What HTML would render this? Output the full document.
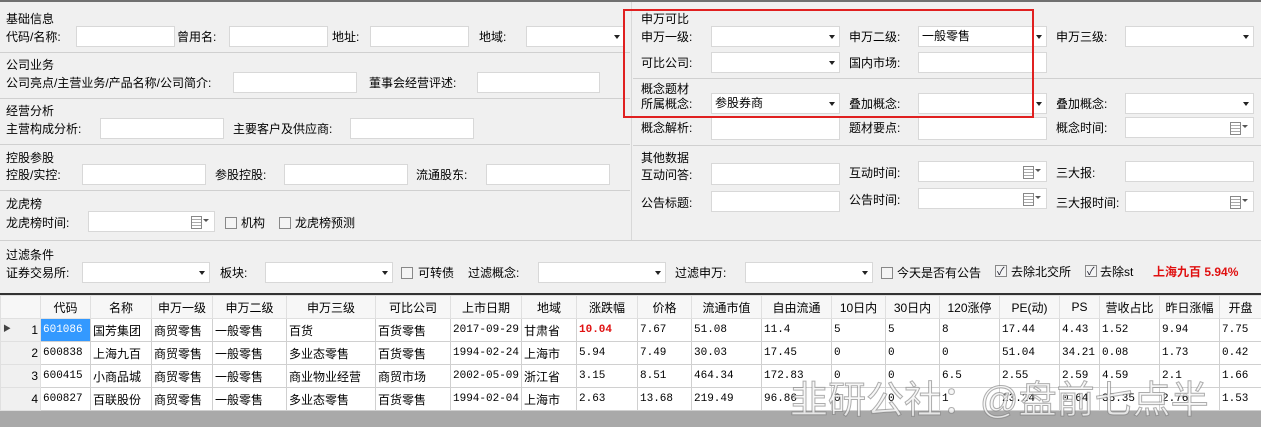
<!DOCTYPE html><html><head><meta charset="utf-8"><style>
*{margin:0;padding:0;box-sizing:border-box}
body{width:1261px;height:427px;overflow:hidden;background:#f0f0f0;font-family:"Liberation Sans","Noto Sans CJK SC",sans-serif;font-size:12px;color:#000;position:relative}
.a{position:absolute;white-space:nowrap;line-height:14px}
.i{position:absolute;background:#fff;border:1px solid #d8d8d8;height:21px;font-size:12px;line-height:19px;padding-left:3px}
.c::after{content:"";position:absolute;right:4px;top:8px;border-left:3.5px solid transparent;border-right:3.5px solid transparent;border-top:4px solid #222}
.d::after{content:"";position:absolute;right:5px;top:7px;border-left:3px solid transparent;border-right:3px solid transparent;border-top:3px solid #555}
.d::before{content:"";position:absolute;right:12px;top:4px;width:9px;height:11px;border:1px solid #888;background:repeating-linear-gradient(#fff 0 2px,#aaa 2px 3px)}
.sep{position:absolute;height:1px;background:#fff;border-top:1px solid #d0d0d0}
.cb{position:absolute;width:12px;height:12px;border:1px solid #888;background:#f4f4f4}
.cb.k::after{content:"✓";position:absolute;left:1px;top:-3px;font-size:11px;color:#223}
table{position:absolute;left:0;top:295px;border-collapse:collapse;font-size:12px;background:#fff;table-layout:fixed;width:1261px}
td{border:1px solid #d0d0d0;height:23px;padding:0 2px;white-space:nowrap;overflow:hidden}
td.n{font-family:"Liberation Mono","Noto Sans CJK SC",monospace;font-size:11px}
tr.h td{background:#f7f7f7;text-align:center;border-color:#e0e0e0}
td.r{background:#f0f0f0;text-align:right;border-color:#e0e0e0}
</style></head><body>
<div style="position:absolute;left:0;top:0;width:1261px;height:2px;background:#707070"></div>
<div class="a" style="left:6px;top:12px">基础信息</div>
<div class="a" style="left:6px;top:30px">代码/名称:</div><div class="i" style="left:76px;top:26px;width:99px"></div>
<div class="a" style="left:177px;top:30px">曾用名:</div><div class="i" style="left:229px;top:26px;width:99px"></div>
<div class="a" style="left:332px;top:30px">地址:</div><div class="i" style="left:370px;top:26px;width:99px"></div>
<div class="a" style="left:479px;top:30px">地域:</div><div class="i c" style="left:526px;top:26px;width:99px"></div>
<div class="sep" style="left:0;top:52px;width:630px"></div>
<div class="a" style="left:6px;top:58px">公司业务</div>
<div class="a" style="left:6px;top:76px">公司亮点/主营业务/产品名称/公司简介:</div><div class="i" style="left:233px;top:72px;width:124px"></div>
<div class="a" style="left:369px;top:76px">董事会经营评述:</div><div class="i" style="left:477px;top:72px;width:123px"></div>
<div class="sep" style="left:0;top:98px;width:630px"></div>
<div class="a" style="left:6px;top:104px">经营分析</div>
<div class="a" style="left:6px;top:122px">主营构成分析:</div><div class="i" style="left:100px;top:118px;width:124px"></div>
<div class="a" style="left:233px;top:122px">主要客户及供应商:</div><div class="i" style="left:350px;top:118px;width:124px"></div>
<div class="sep" style="left:0;top:144px;width:630px"></div>
<div class="a" style="left:6px;top:151px">控股参股</div>
<div class="a" style="left:6px;top:168px">控股/实控:</div><div class="i" style="left:82px;top:164px;width:124px"></div>
<div class="a" style="left:215px;top:168px">参股控股:</div><div class="i" style="left:284px;top:164px;width:124px"></div>
<div class="a" style="left:416px;top:168px">流通股东:</div><div class="i" style="left:486px;top:164px;width:124px"></div>
<div class="sep" style="left:0;top:190px;width:630px"></div>
<div class="a" style="left:6px;top:197px">龙虎榜</div>
<div class="a" style="left:6px;top:216px">龙虎榜时间:</div><div class="i d" style="left:88px;top:211px;width:127px"></div>
<div class="cb" style="left:225px;top:217px"></div><div class="a" style="left:241px;top:216px">机构</div>
<div class="cb" style="left:279px;top:217px"></div><div class="a" style="left:295px;top:216px">龙虎榜预测</div>
<div class="a" style="left:641px;top:12px">申万可比</div>
<div class="a" style="left:641px;top:30px">申万一级:</div><div class="i c" style="left:711px;top:26px;width:129px"></div>
<div class="a" style="left:849px;top:30px">申万二级:</div><div class="i c" style="left:918px;top:26px;width:129px">一般零售</div>
<div class="a" style="left:1056px;top:30px">申万三级:</div><div class="i c" style="left:1125px;top:26px;width:129px"></div>
<div class="a" style="left:641px;top:56px">可比公司:</div><div class="i c" style="left:711px;top:52px;width:129px"></div>
<div class="a" style="left:849px;top:56px">国内市场:</div><div class="i" style="left:918px;top:52px;width:129px"></div>
<div class="sep" style="left:633px;top:78px;width:628px"></div>
<div class="a" style="left:641px;top:82px">概念题材</div>
<div class="a" style="left:641px;top:97px">所属概念:</div><div class="i c" style="left:711px;top:93px;width:129px">参股券商</div>
<div class="a" style="left:849px;top:97px">叠加概念:</div><div class="i c" style="left:918px;top:93px;width:129px"></div>
<div class="a" style="left:1056px;top:97px">叠加概念:</div><div class="i c" style="left:1125px;top:93px;width:129px"></div>
<div class="a" style="left:641px;top:121px">概念解析:</div><div class="i" style="left:711px;top:117px;width:129px;height:23px"></div>
<div class="a" style="left:849px;top:121px">题材要点:</div><div class="i" style="left:918px;top:117px;width:129px;height:23px"></div>
<div class="a" style="left:1056px;top:121px">概念时间:</div><div class="i d" style="left:1125px;top:117px;width:129px"></div>
<div class="sep" style="left:633px;top:145px;width:628px"></div>
<div class="a" style="left:641px;top:151px">其他数据</div>
<div class="a" style="left:641px;top:168px">互动问答:</div><div class="i" style="left:711px;top:163px;width:129px;height:22px"></div>
<div class="a" style="left:849px;top:166px">互动时间:</div><div class="i d" style="left:918px;top:161px;width:129px"></div>
<div class="a" style="left:1056px;top:166px">三大报:</div><div class="i" style="left:1125px;top:161px;width:129px"></div>
<div class="a" style="left:641px;top:196px">公告标题:</div><div class="i" style="left:711px;top:191px;width:129px"></div>
<div class="a" style="left:849px;top:193px">公告时间:</div><div class="i d" style="left:918px;top:188px;width:129px"></div>
<div class="a" style="left:1056px;top:196px">三大报时间:</div><div class="i d" style="left:1125px;top:191px;width:129px"></div>
<div style="position:absolute;left:631px;top:2px;width:1px;height:238px;background:#d8d8d8"></div>
<div class="sep" style="left:0;top:240px;width:1261px"></div>
<div class="a" style="left:6px;top:248px">过滤条件</div>
<div class="a" style="left:6px;top:266px">证券交易所:</div><div class="i c" style="left:82px;top:262px;width:128px"></div>
<div class="a" style="left:220px;top:266px">板块:</div><div class="i c" style="left:265px;top:262px;width:128px"></div>
<div class="cb" style="left:401px;top:267px"></div><div class="a" style="left:418px;top:266px">可转债</div>
<div class="a" style="left:468px;top:266px">过滤概念:</div><div class="i c" style="left:538px;top:262px;width:128px"></div>
<div class="a" style="left:675px;top:266px">过滤申万:</div><div class="i c" style="left:745px;top:262px;width:128px"></div>
<div class="cb" style="left:881px;top:267px"></div><div class="a" style="left:897px;top:266px">今天是否有公告</div>
<div class="cb k" style="left:995px;top:265px"></div><div class="a" style="left:1011px;top:265px">去除北交所</div>
<div class="cb k" style="left:1085px;top:265px"></div><div class="a" style="left:1100px;top:265px">去除st</div>
<div class="a" style="left:1153px;top:265px;color:#e01010;font-weight:bold">上海九百 5.94%</div>
<div style="position:absolute;left:0;top:293px;width:1261px;height:2px;background:#333"></div>
<div style="position:absolute;left:0;top:410px;width:1261px;height:17px;background:#a9a9a9"></div>
<table>
<colgroup><col style="width:40px"><col style="width:50px"><col style="width:61px"><col style="width:61px"><col style="width:74px"><col style="width:89px"><col style="width:75px"><col style="width:71px"><col style="width:55px"><col style="width:61px"><col style="width:54px"><col style="width:70px"><col style="width:70px"><col style="width:54px"><col style="width:54px"><col style="width:60px"><col style="width:60px"><col style="width:40px"><col style="width:60px"><col style="width:60px"><col style="width:42px"></colgroup>
<tr class="h"><td class="r" style="background:#f7f7f7"></td><td>代码</td><td>名称</td><td>申万一级</td><td>申万二级</td><td>申万三级</td><td>可比公司</td><td>上市日期</td><td>地域</td><td>涨跌幅</td><td>价格</td><td>流通市值</td><td>自由流通</td><td>10日内</td><td>30日内</td><td>120涨停</td><td>PE(动)</td><td>PS</td><td>营收占比</td><td>昨日涨幅</td><td>开盘</td></tr>
<tr><td class="r"><span style="float:left;font-size:8px;color:#444">▶</span>1</td><td class="n" style="background:#3399ff;color:#fff">601086</td><td>国芳集团</td><td>商贸零售</td><td>一般零售</td><td>百货</td><td>百货零售</td><td class="n">2017-09-29</td><td>甘肃省</td><td class="n" style="color:#e01010;font-weight:bold">10.04</td><td class="n">7.67</td><td class="n">51.08</td><td class="n">11.4</td><td class="n">5</td><td class="n">5</td><td class="n">8</td><td class="n">17.44</td><td class="n">4.43</td><td class="n">1.52</td><td class="n">9.94</td><td class="n">7.75</td></tr>
<tr><td class="r">2</td><td class="n">600838</td><td>上海九百</td><td>商贸零售</td><td>一般零售</td><td>多业态零售</td><td>百货零售</td><td class="n">1994-02-24</td><td>上海市</td><td class="n">5.94</td><td class="n">7.49</td><td class="n">30.03</td><td class="n">17.45</td><td class="n">0</td><td class="n">0</td><td class="n">0</td><td class="n">51.04</td><td class="n">34.21</td><td class="n">0.08</td><td class="n">1.73</td><td class="n">0.42</td></tr>
<tr><td class="r">3</td><td class="n">600415</td><td>小商品城</td><td>商贸零售</td><td>一般零售</td><td>商业物业经营</td><td>商贸市场</td><td class="n">2002-05-09</td><td>浙江省</td><td class="n">3.15</td><td class="n">8.51</td><td class="n">464.34</td><td class="n">172.83</td><td class="n">0</td><td class="n">0</td><td class="n">6.5</td><td class="n">2.55</td><td class="n">2.59</td><td class="n">4.59</td><td class="n">2.1</td><td class="n">1.66</td></tr>
<tr><td class="r">4</td><td class="n">600827</td><td>百联股份</td><td>商贸零售</td><td>一般零售</td><td>多业态零售</td><td>百货零售</td><td class="n">1994-02-04</td><td>上海市</td><td class="n">2.63</td><td class="n">13.68</td><td class="n">219.49</td><td class="n">96.86</td><td class="n">0</td><td class="n">0</td><td class="n">1</td><td class="n">23.24</td><td class="n">0.64</td><td class="n">35.35</td><td class="n">2.76</td><td class="n">1.53</td></tr>
</table>
<div class="a" style="left:790px;top:380px;font-size:38px;line-height:42px;color:rgba(245,245,245,0.8);-webkit-text-stroke:1px rgba(110,110,110,0.55)">韭研公社：@盘前七点半</div>
<div style="position:absolute;left:623px;top:9px;width:411px;height:109px;border:2.5px solid #e02020"></div>
</body></html>
